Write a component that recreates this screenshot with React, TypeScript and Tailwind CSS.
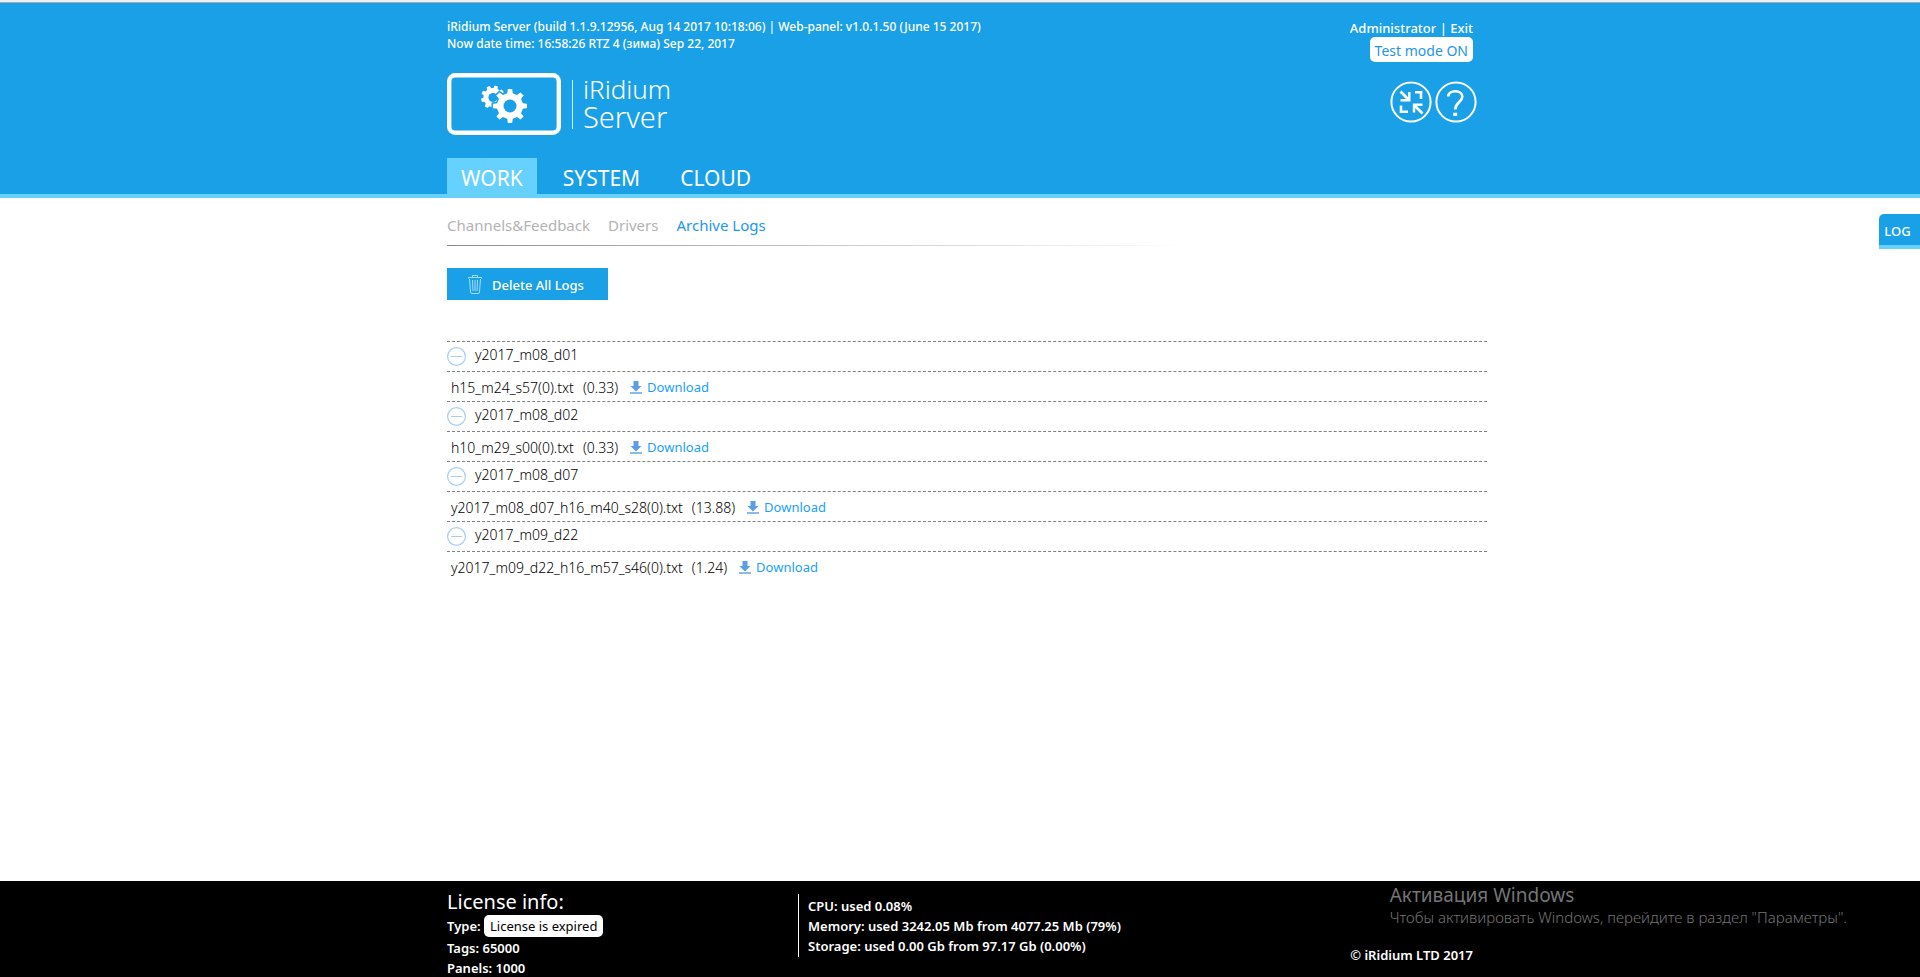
import React from 'react';

interface LogFile {
  name: string;
  size: string;
}

interface LogFolder {
  name: string;
  files: LogFile[];
}

const TABS = ['WORK', 'SYSTEM', 'CLOUD'];
const SUB_TABS = ['Channels&Feedback', 'Drivers', 'Archive Logs'];

const FOLDERS: LogFolder[] = [
  { name: 'y2017_m08_d01', files: [{ name: 'h15_m24_s57(0).txt', size: '0.33' }] },
  { name: 'y2017_m08_d02', files: [{ name: 'h10_m29_s00(0).txt', size: '0.33' }] },
  { name: 'y2017_m08_d07', files: [{ name: 'y2017_m08_d07_h16_m40_s28(0).txt', size: '13.88' }] },
  { name: 'y2017_m09_d22', files: [{ name: 'y2017_m09_d22_h16_m57_s46(0).txt', size: '1.24' }] },
];

// Gear outline as a closed path with flat teeth
const gearPath = (cx: number, cy: number, outer: number, inner: number, teeth: number, turn: number) => {
  const step = (Math.PI * 2) / teeth;
  const point = (r: number, a: number) => (cx + r * Math.cos(a)).toFixed(2) + ' ' + (cy + r * Math.sin(a)).toFixed(2);
  const points: string[] = [];
  for (let i = 0; i < teeth; i++) {
    const a = i * step + turn;
    points.push(point(inner, a - step * 0.32), point(outer, a - step * 0.2), point(outer, a + step * 0.2), point(inner, a + step * 0.32));
  }
  return 'M' + points.join('L') + 'Z';
};

const Logo = () => (
  <div className="flex items-center">
    <svg width="114" height="62" viewBox="0 0 114 62" fill="none" aria-hidden="true">
      <rect x="2.2" y="2.2" width="109.6" height="57.6" rx="6" stroke="#fff" strokeWidth="4.4" />
      <path d={gearPath(46, 24.5, 12, 9.6, 9, 0.1)} fill="#fff" />
      <circle cx="46" cy="24.5" r="4.6" fill="#1aa0e6" />
      <path d={gearPath(63, 33, 18, 13.8, 8, 0)} fill="#fff" stroke="#1aa0e6" strokeWidth="1.5" />
      <circle cx="63" cy="33" r="6.5" fill="#1aa0e6" />
    </svg>
    <div className="ml-[11px] h-[49px] w-px bg-white/80" />
    <div className="ml-[10px] pb-[2px] leading-7 font-light">
      <p className="text-[26px]">iRidium</p>
      <p className="text-[29px]">Server</p>
    </div>
  </div>
);

const CollapseIcon = () => (
  <svg width="42" height="42" viewBox="0 0 42 42" fill="none" stroke="#fff" aria-hidden="true">
    <circle cx="21" cy="21" r="19.6" strokeWidth="2" />
    <path d="M10.5 10.5L18.5 18.5M32.5 32.5L24.5 24.5" strokeWidth="2.8" />
    <path d="M19.3 11V19.3H10.5M24 31.5V23.8H32.5" strokeWidth="2.4" />
    <path d="M25 11.2H31V18M11 24.5V30.8H18" strokeWidth="2.6" />
  </svg>
);

const HelpIcon = () => (
  <svg width="42" height="42" viewBox="0 0 42 42" fill="none" stroke="#fff" aria-hidden="true">
    <circle cx="21" cy="21" r="19.6" strokeWidth="2" />
    <path d="M13.3 15.5C13.3 12 16.5 10.2 20.3 10.2C24.5 10.2 27.3 12.6 27.3 15.8C27.3 20.8 20.2 21.5 20.2 28.5" strokeWidth="2.6" />
    <path d="M18.2 33.3H22.2" strokeWidth="3.2" />
  </svg>
);

const TrashIcon = () => (
  <svg width="14" height="19" viewBox="0 0 14 19" fill="none" stroke="#a9dcf8" aria-hidden="true">
    <path d="M0.5 3.5V2.5H13.5V3.5M4.5 2.5V0.5H9.5V2.5M1.5 4L2.5 17Q2.5 18.5 4 18.5H10Q11.5 18.5 11.5 17L12.5 4M4.5 5L5 16M7 5V16M9.5 5L9 16" />
  </svg>
);

const MinusIcon = () => (
  <svg width="19" height="19" viewBox="0 0 19 19" fill="none" stroke="#a8cdf2" aria-hidden="true">
    <circle cx="9.5" cy="9.5" r="8.9" strokeWidth="1.2" />
    <path d="M4 9.5H15" />
  </svg>
);

const DownloadIcon = () => (
  <svg width="12" height="13" viewBox="0 0 12 13" aria-hidden="true">
    <path d="M3.5 0H8.5V5H11.5L6 10.5L0.5 5H3.5Z" fill="#5b9ee3" />
    <path d="M0 11H12V13H0Z" fill="#8bbaf0" />
  </svg>
);

const Header = () => (
  <header className="border-t-2 border-[#eeeeee] text-white">
    <div className="border-t border-b-4 border-t-[#a0a8b0] border-b-[#66d0ff] bg-[#1aa0e6]">
      <div className="mx-auto flex max-w-[1054px] justify-between pl-[14px]">
        <div className="flex flex-col">
          <div className="pt-[15px] text-[12px] leading-[17px] font-medium">
            <p>iRidium Server (build 1.1.9.12956, Aug 14 2017 10:18:06) | Web-panel: v1.0.1.50 (June 15 2017)</p>
            <p>Now date time: 16:58:26 RTZ 4 (зима) Sep 22, 2017</p>
          </div>
          <div className="mt-[21px]">
            <Logo />
          </div>
          <nav className="mt-[23px] flex gap-3 text-[21px]">
            {TABS.map((tab, i) => (
              <a key={tab} href="#" className={'flex h-9 items-center px-[14px] pt-[6px] ' + (i === 0 ? 'bg-[#66d0ff]' : '')}>
                {tab}
              </a>
            ))}
          </nav>
        </div>
        <div className="flex flex-col items-end pt-4 pr-[14px]">
          <div className="text-[13px] leading-[18px] font-medium">
            <a href="#">Administrator</a> | <a href="#">Exit</a>
          </div>
          <button className="h-[25px] rounded-[5px] bg-white px-[5px] pt-[2px] text-[14px] leading-[23px] text-[#1f94e8]">
            Test mode ON
          </button>
          <div className="-mr-1 mt-[19px] flex gap-[3px]">
            <button aria-label="Collapse"><CollapseIcon /></button>
            <button aria-label="Help"><HelpIcon /></button>
          </div>
        </div>
      </div>
    </div>
  </header>
);

const ArchiveLogs = () => (
  <main className="mx-auto w-full max-w-[1054px] flex-1 pl-[14px]">
    <nav className="flex gap-[18px] pt-[17px] text-[15px] leading-5">
      {SUB_TABS.map((tab, i) => (
        <a key={tab} href="#" className={i === 2 ? 'text-[#1a97f0]' : 'text-[#b3b3b3]'}>
          {tab}
        </a>
      ))}
    </nav>
    <div className="mt-[10px] h-px w-[740px] bg-linear-to-r from-[#8c8c8c] to-transparent" />
    <button className="mt-[22px] flex h-8 items-center bg-[#1aa0e6] pr-6 pl-[21px] text-[13px] font-medium text-white">
      <TrashIcon />
      <span className="ml-[10px] pt-[3px]">Delete All Logs</span>
    </button>

    <div className="mt-[41px] text-[14px] font-light text-black">
      {FOLDERS.map((folder) => (
        <section key={folder.name}>
          <h2 className="flex h-[30px] items-center border-t border-dashed border-[#808080]">
            <button className="flex items-center gap-[9px]">
              <MinusIcon />
              <span className="pb-1">{folder.name}</span>
            </button>
          </h2>
          {folder.files.map((file) => (
            <div key={file.name} className="flex h-[30px] items-center border-t border-dashed border-[#808080] pt-[2px] pl-1">
              <span>{file.name}</span>
              <span className="ml-[9px]">({file.size})</span>
              <a href="#" className="ml-3 flex items-center gap-[5px] text-[13px] font-normal text-[#1a9ffc]">
                <DownloadIcon />
                Download
              </a>
            </div>
          ))}
        </section>
      ))}
    </div>
  </main>
);

const Footer = () => (
  <footer className="relative bg-black text-white">
    <div className="mx-auto flex h-24 max-w-[1054px] pl-[14px] text-[13px] leading-5 font-semibold">
      <div className="w-[351px] pt-2">
        <h2 className="text-[20px] leading-[26px] font-normal">License info:</h2>
        <p className="leading-[23px]">
          Type: <span className="inline-block h-[22px] rounded-[5px] bg-white px-[6px] leading-[22px] font-normal text-black">License is expired</span>
        </p>
        <p>Tags: 65000</p>
        <p>Panels: 1000</p>
      </div>
      <div className="mt-[13px] h-[63px] border-l border-white pt-[2px] pl-[9px]">
        <p>CPU: used 0.08%</p>
        <p>Memory: used 3242.05 Mb from 4077.25 Mb (79%)</p>
        <p>Storage: used 0.00 Gb from 97.17 Gb (0.00%)</p>
      </div>
      <p className="ml-auto self-end pr-[14px] pb-3">© iRidium LTD 2017</p>
    </div>
    <div className="absolute top-1 right-[73px] text-[#757575]">
      <p className="text-[19px] leading-5">Активация Windows</p>
      <p className="text-[15px] leading-6 font-light">Чтобы активировать Windows, перейдите в раздел "Параметры".</p>
    </div>
  </footer>
);

export default function App() {
  return (
    <div className="relative flex min-h-screen flex-col bg-white font-['Noto_Sans','Open_Sans',sans-serif]">
      <Header />
      <ArchiveLogs />
      <button className="absolute top-[214px] right-0 h-[35px] w-[41px] rounded-tl-[5px] border-b-4 border-[#66d0ff] bg-[#1aa0e6] pt-1 pr-1 text-[13px] font-medium text-white">
        LOG
      </button>
      <Footer />
    </div>
  );
}
